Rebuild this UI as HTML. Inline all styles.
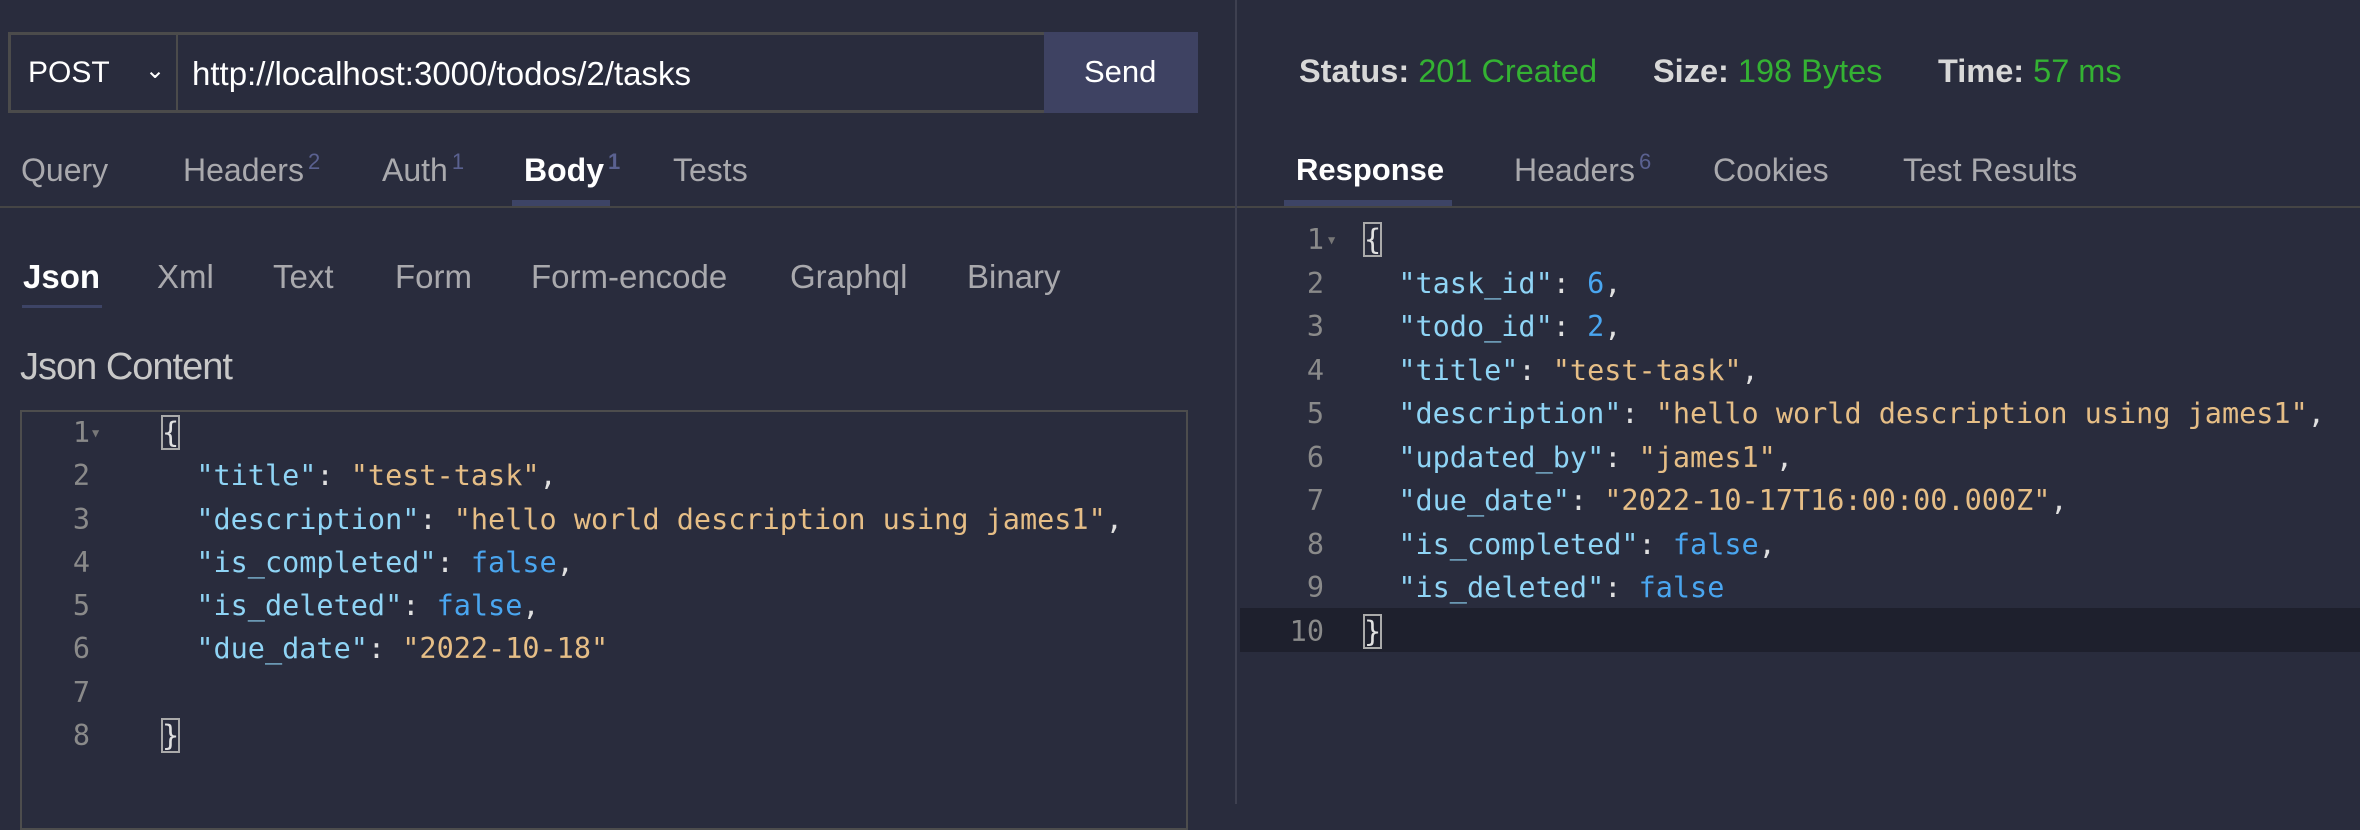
<!DOCTYPE html>
<html><head><meta charset="utf-8">
<style>
*{margin:0;padding:0;box-sizing:border-box}
body{width:2360px;height:804px;background:#292c3d;position:relative;overflow:hidden;font-family:"Liberation Sans",sans-serif;color:#c8c8c8}
.a{position:absolute;white-space:pre}
.t{font-size:32px;line-height:38px;color:#a9a9ad}
.st{font-size:33px;line-height:38px;color:#a9a9ad}
.w{color:#fff}
sup{font-size:22px;color:#5a6190;vertical-align:top;position:relative;top:-8px;margin-left:4px}
.code{font-family:"DejaVu Sans Mono","Liberation Mono",monospace;font-size:28.5px;line-height:43.3px}
.ln{color:#8a8a8a;text-align:right;width:42px}
.k{color:#8fd4f5}.s{color:#e6be86}.n{color:#4aa6f0}.p{color:#e0e0e0}
.br{outline:2px solid #aaa;outline-offset:-1px}
.g{color:#34b233}
</style></head><body>
<!-- URL bar -->
<div class="a" style="left:8px;top:32px;width:1190px;height:81px;border:3px solid #4b4b4b;border-right:none"></div>
<div class="a" style="left:176px;top:34px;width:2px;height:77px;background:#4b4b4b"></div>
<div class="a" style="left:1044px;top:32px;width:154px;height:81px;background:#3e4262"></div>
<div class="a" style="left:28px;top:56px;font-size:30px;color:#fff">POST</div>
<div class="a" style="left:145px;top:56px;font-size:24px;color:#fff">&#8964;</div>
<div class="a" style="left:192px;top:55px;font-size:33px;color:#fff">http://localhost:3000/todos/2/tasks</div>
<div class="a" style="left:1084px;top:54px;font-size:31px;color:#fff">Send</div>
<!-- left tabs -->
<div class="a t" style="left:21px;top:151px">Query</div>
<div class="a t" style="left:183px;top:151px">Headers<sup>2</sup></div>
<div class="a t" style="left:382px;top:151px">Auth<sup>1</sup></div>
<div class="a t w" style="left:524px;top:151px;font-weight:bold;color:#fff">Body<sup>1</sup></div>
<div class="a t" style="left:673px;top:151px">Tests</div>
<div class="a" style="left:512px;top:200px;width:98px;height:6px;background:#3d4466"></div>
<div class="a" style="left:0;top:206px;width:1236px;height:2px;background:#454545"></div>
<!-- sub tabs -->
<div class="a st w" style="left:23px;top:258px;font-weight:bold;color:#fff">Json</div>
<div class="a st" style="left:157px;top:258px">Xml</div>
<div class="a st" style="left:273px;top:258px">Text</div>
<div class="a st" style="left:395px;top:258px">Form</div>
<div class="a st" style="left:531px;top:258px">Form-encode</div>
<div class="a st" style="left:790px;top:258px">Graphql</div>
<div class="a st" style="left:967px;top:258px">Binary</div>
<div class="a" style="left:22px;top:305px;width:80px;height:3px;background:#3d4466"></div>
<div class="a" style="left:20px;top:346px;font-size:38px;color:#c8c8c8;letter-spacing:-1px">Json Content</div>
<!-- editor -->
<div class="a" style="left:20px;top:410px;width:1168px;height:420px;border:2px solid #4d4d4d"></div>
<div class="a code" style="left:48px;top:411px">
<div class="ln" style="position:absolute;left:0;top:0">1<br>2<br>3<br>4<br>5<br>6<br>7<br>8</div>
<div style="position:absolute;left:44px;top:0;color:#777;font-size:12px;line-height:44px">▼</div>
<div style="position:absolute;left:114px;top:0"><span class="p br">{</span>
  <span class="k">"title"</span><span class="p">: </span><span class="s">"test-task"</span><span class="p">,</span>
  <span class="k">"description"</span><span class="p">: </span><span class="s">"hello world description using james1"</span><span class="p">,</span>
  <span class="k">"is_completed"</span><span class="p">: </span><span class="n">false</span><span class="p">,</span>
  <span class="k">"is_deleted"</span><span class="p">: </span><span class="n">false</span><span class="p">,</span>
  <span class="k">"due_date"</span><span class="p">: </span><span class="s">"2022-10-18"</span>

<span class="p br">}</span></div>
</div>
<!-- vertical divider -->
<div class="a" style="left:1235px;top:0;width:2px;height:804px;background:#3e4050"></div>
<!-- right status -->
<div class="a" style="left:1299px;top:53px;font-size:32.5px;color:#d8d8d8;font-weight:bold">Status: <span class="g" style="font-weight:normal">201 Created</span></div>
<div class="a" style="left:1653px;top:53px;font-size:32.5px;color:#d8d8d8;font-weight:bold">Size: <span class="g" style="font-weight:normal">198 Bytes</span></div>
<div class="a" style="left:1938px;top:53px;font-size:32.5px;color:#d8d8d8;font-weight:bold">Time: <span class="g" style="font-weight:normal">57 ms</span></div>
<!-- right tabs -->
<div class="a t w" style="left:1296px;top:151px;font-weight:bold;color:#fff;font-size:31px">Response</div>
<div class="a t" style="left:1514px;top:151px">Headers<sup>6</sup></div>
<div class="a t" style="left:1713px;top:151px">Cookies</div>
<div class="a t" style="left:1903px;top:151px">Test Results</div>
<div class="a" style="left:1284px;top:200px;width:168px;height:6px;background:#3d4466"></div>
<div class="a" style="left:1237px;top:206px;width:1123px;height:2px;background:#454545"></div>
<!-- response code -->
<div class="a" style="left:1240px;top:608px;width:1120px;height:44px;background:#1e202d"></div>
<div class="a code" style="left:1282px;top:218px">
<div class="ln" style="position:absolute;left:0;top:0;line-height:43.5px">1<br>2<br>3<br>4<br>5<br>6<br>7<br>8<br>9<br>10</div>
<div style="position:absolute;left:46px;top:0;color:#777;font-size:12px;line-height:44px">▼</div>
<div style="position:absolute;left:82px;top:0;line-height:43.5px"><span class="p br">{</span>
  <span class="k">"task_id"</span><span class="p">: </span><span class="n">6</span><span class="p">,</span>
  <span class="k">"todo_id"</span><span class="p">: </span><span class="n">2</span><span class="p">,</span>
  <span class="k">"title"</span><span class="p">: </span><span class="s">"test-task"</span><span class="p">,</span>
  <span class="k">"description"</span><span class="p">: </span><span class="s">"hello world description using james1"</span><span class="p">,</span>
  <span class="k">"updated_by"</span><span class="p">: </span><span class="s">"james1"</span><span class="p">,</span>
  <span class="k">"due_date"</span><span class="p">: </span><span class="s">"2022-10-17T16:00:00.000Z"</span><span class="p">,</span>
  <span class="k">"is_completed"</span><span class="p">: </span><span class="n">false</span><span class="p">,</span>
  <span class="k">"is_deleted"</span><span class="p">: </span><span class="n">false</span>
<span class="p br">}</span></div>
</div>
</body></html>
